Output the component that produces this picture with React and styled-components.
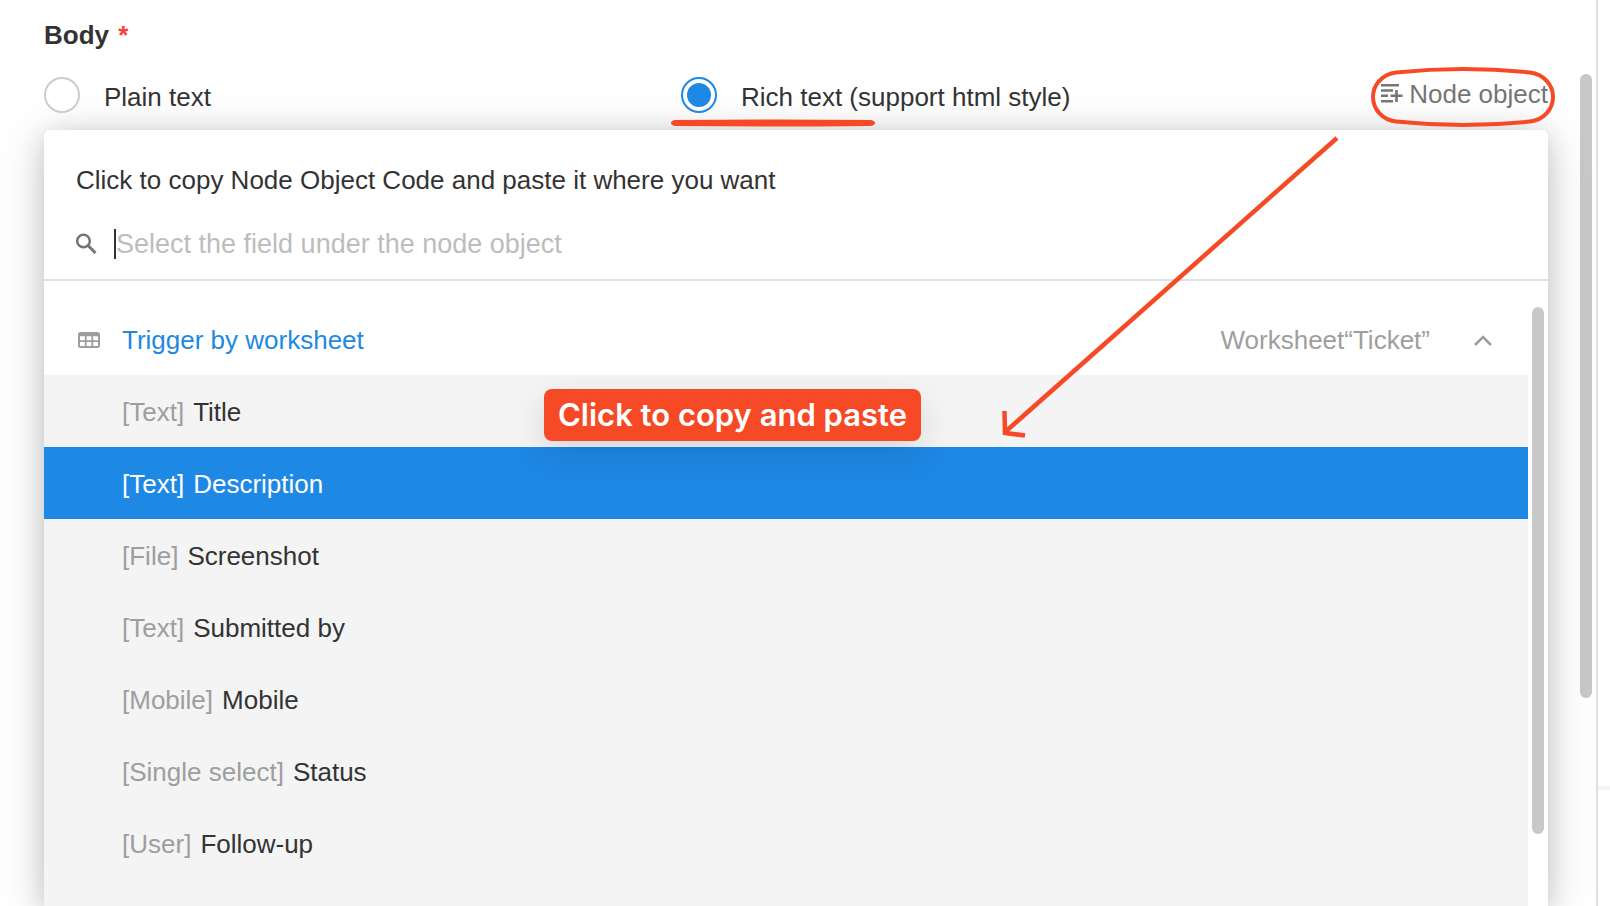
import { useState } from 'react'
import styled, { createGlobalStyle } from 'styled-components'

const fields = [
    { type: 'Text', name: 'Title' },
    { type: 'Text', name: 'Description' },
    { type: 'File', name: 'Screenshot' },
    { type: 'Text', name: 'Submitted by' },
    { type: 'Mobile', name: 'Mobile' },
    { type: 'Single select', name: 'Status' },
    { type: 'User', name: 'Follow-up' },
]

const App = () => {
    const [format, setFormat] = useState('rich')
    const [active, setActive] = useState('Description')
    const [search, setSearch] = useState('')

    const formatHandler = (e) => {
        setFormat(e.target.value)
    }

    return (
        <>
            <GlobalStyle />
            <Page>
                <Main>
                    <Content>
                        <Heading>Body <span>*</span></Heading>
                        <FormatRow>
                            <Options>
                                <Option>
                                    <Radio type="radio" name="format" value="plain" checked={format === 'plain'} onChange={formatHandler} />
                                    <OptionText>Plain text</OptionText>
                                </Option>
                                <Option>
                                    <Radio type="radio" name="format" value="rich" checked={format === 'rich'} onChange={formatHandler} />
                                    <OptionText>Rich text (support html style)</OptionText>
                                    <Underline viewBox="0 0 204 8" aria-hidden="true">
                                        <path d="M4 1 Q102 0 200 1 Q204 2 204 4 Q204 6 200 7 Q102 8 4 7 Q0 6 0 4 Q0 2 4 1 Z" fill="#f54a25" />
                                    </Underline>
                                </Option>
                            </Options>
                            <NodeButton type="button">
                                <svg width="22" height="20" viewBox="0 0 22 20" fill="#757575" aria-hidden="true">
                                    <path d="M0 0h18v2.500H0zM0 5.300h12v2.500H0zM0 10.600h7v2.500H0zM0 16h12v2.500H0zM9.500 10.600h12v2.500h-12zM14.200 6h2.600v12h-2.600z" />
                                </svg>
                                Node object
                                <Ring viewBox="0 0 184 60" fill="none" stroke="#f54a25" aria-hidden="true">
                                    <path d="M25 5.500 Q92 -1.500 159 5.500 C173 7.200 182 18 182 30 C182 42 173 52.800 159 54.500 Q92 61.500 25 54.500 C11 52.800 2 42 2 30 C2 18 11 7.200 25 5.500 Z" strokeWidth="4" />
                                </Ring>
                            </NodeButton>
                        </FormatRow>
                        <Panel>
                            <PanelTitle>Click to copy Node Object Code and paste it where you want</PanelTitle>
                            <SearchRow>
                                <svg width="22" height="22" viewBox="1 0 22 22" fill="none" stroke="#757575" aria-hidden="true">
                                    <circle cx="8.500" cy="8" r="6.300" strokeWidth="2.500" />
                                    <path d="M13 12.500 L20.500 20" strokeWidth="3" />
                                </svg>
                                <Caret />
                                <SearchInput
                                    aria-label="Select the field under the node object"
                                    placeholder="Select the field under the node object"
                                    value={search}
                                    onChange={(e) => setSearch(e.target.value)}
                                />
                            </SearchRow>
                            <PanelBody>
                                <Group>
                                    <GroupHeader type="button" aria-expanded="true">
                                        <svg width="22" height="17" viewBox="0 0 22 17" aria-hidden="true">
                                            <rect width="22" height="16" rx="2.500" fill="#9e9e9e" />
                                            <path d="M2 4.300h4.800v4H2zM8.600 4.300h4.800v4H8.600zM15.200 4.300h4.800v4h-4.800zM2 10h4.800v4H2zM8.600 10h4.800v4H8.600zM15.200 10h4.800v4h-4.800z" fill="#fff" />
                                        </svg>
                                        <GroupName>Trigger by worksheet</GroupName>
                                        <GroupSource>Worksheet“Ticket”</GroupSource>
                                        <svg width="18" height="11" viewBox="0 0 18 11" fill="none" stroke="#9e9e9e" strokeWidth="2.500" aria-hidden="true">
                                            <path d="M1 10 L9 2 L17 10" />
                                        </svg>
                                    </GroupHeader>
                                    <FieldList>
                                        {fields.map(field => (
                                            <li key={field.name}>
                                                <FieldButton type="button" $active={field.name === active} onClick={() => setActive(field.name)}>
                                                    <FieldType $active={field.name === active}>[{field.type}]</FieldType>
                                                    {field.name}
                                                </FieldButton>
                                            </li>
                                        ))}
                                    </FieldList>
                                    <Badge>Click to copy and paste</Badge>
                                </Group>
                                <PanelTrack>
                                    <Thumb $size="88%" />
                                </PanelTrack>
                            </PanelBody>
                        </Panel>
                        <Arrow viewBox="0 0 340 304" fill="none" stroke="#f54a25" aria-hidden="true">
                            <path d="M337 3 L4 298" strokeWidth="4.500" />
                            <path d="M4.500 276 L5 298 L25 300.500" strokeWidth="4.500" />
                        </Arrow>
                    </Content>
                    <PageTrack>
                        <Thumb $size="75%" />
                    </PageTrack>
                </Main>
                <Side />
            </Page>
        </>
    )
}

const GlobalStyle = createGlobalStyle`
    * {
        box-sizing: border-box;
    }

    body {
        margin: 0;
        background: #fff;
        color: #333;
        font-family: "Liberation Sans", Arial, sans-serif;
        font-size: 26px;
        line-height: 30px;
    }

    button, input {
        margin: 0;
        padding: 0;
        border: none;
        background: none;
        color: inherit;
        font: inherit;
        text-align: left;
    }

    button {
        cursor: pointer;
    }

    svg {
        flex: none;
    }
`

const Page = styled.div`
    display: flex;
    height: 100vh;
    overflow: hidden;
`

const Main = styled.main`
    flex: 1;
    min-width: 0;
    display: flex;
    padding-right: 4px;
    border-right: 2px solid #e0e0e0;
`

const Content = styled.div`
    position: relative;
    flex: 1;
    min-width: 0;
    display: flex;
    flex-direction: column;
    padding: 20px 32px 0 44px;
`

const Heading = styled.h2`
    margin: 0 0 27px;
    font-size: 26px;
    font-weight: bold;

    span {
        margin-left: 2px;
        color: #f44336;
    }
`

const FormatRow = styled.div`
    position: relative;
    z-index: 1;
    display: flex;
    align-items: center;
`

const Options = styled.div`
    flex: 1;
    display: grid;
    grid-template-columns: 1fr 1fr;
`

const Option = styled.label`
    position: relative;
    display: flex;
    align-items: center;
    gap: 24px;
    cursor: pointer;
`

const OptionText = styled.span`
    padding-top: 4px;
`

const Radio = styled.input`
    appearance: none;
    width: 36px;
    height: 36px;
    border: 2px solid #ccc;
    border-radius: 50%;
    background: #fff;

    &:checked {
        padding: 4px;
        border-color: #1e88e5;
        background: #1e88e5 content-box;
    }
`

const Underline = styled.svg`
    position: absolute;
    top: 42px;
    left: -10px;
    width: 204px;
    height: 8px;
`

const NodeButton = styled.button`
    position: relative;
    display: flex;
    align-items: center;
    justify-content: flex-end;
    gap: 6px;
    width: 230px;
    padding-bottom: 2px;
    color: #757575;
`

const Ring = styled.svg`
    position: absolute;
    top: -12px;
    right: -7px;
    width: 184px;
    height: 60px;
`

const Panel = styled.section`
    flex: 1;
    min-height: 0;
    display: flex;
    flex-direction: column;
    margin-top: 17px;
    padding-top: 34px;
    border-radius: 6px 6px 0 0;
    background: #fff;
    box-shadow: 0 8px 48px rgba(0, 0, 0, 0.18), 0 4px 24px rgba(0, 0, 0, 0.12);
`

const PanelTitle = styled.p`
    margin: 0 32px;
    line-height: 32px;
`

const SearchRow = styled.div`
    display: flex;
    align-items: center;
    height: 85px;
    padding: 13px 32px 0;
    border-bottom: 2px solid #e0e0e0;
`

const Caret = styled.span`
    width: 2px;
    height: 30px;
    margin-left: 16px;
    background: #333;
`

const SearchInput = styled.input`
    flex: 1;
    min-width: 0;
    outline: none;
    font-size: 27px;

    &::placeholder {
        color: #bdbdbd;
        opacity: 1;
    }
`

const PanelBody = styled.div`
    flex: 1;
    min-height: 0;
    display: flex;
    gap: 4px;
    padding: 22px 4px 0 0;
`

const Group = styled.div`
    position: relative;
    flex: 1;
    min-width: 0;
    display: flex;
    flex-direction: column;
    overflow: hidden;
`

const GroupHeader = styled.button`
    flex: none;
    display: flex;
    align-items: center;
    width: 100%;
    height: 72px;
    padding: 2px 36px 0 34px;
`

const GroupName = styled.span`
    flex: 1;
    margin-left: 22px;
    color: #1e88e5;
`

const GroupSource = styled.span`
    margin-right: 44px;
    color: #9e9e9e;
`

const FieldList = styled.ul`
    flex: 1;
    margin: 0;
    padding: 0;
    list-style: none;
    background: #f4f4f4;
`

const FieldButton = styled.button`
    display: flex;
    align-items: center;
    gap: 9px;
    width: 100%;
    height: 72px;
    padding: 2px 78px 0;
    background: ${({ $active }) => ($active ? '#1e88e5' : 'transparent')};
    color: ${({ $active }) => ($active ? '#fff' : '#333')};
`

const FieldType = styled.span`
    color: ${({ $active }) => ($active ? '#fff' : '#9e9e9e')};
`

const Badge = styled.div`
    position: absolute;
    top: 86px;
    left: 500px;
    padding: 0 14px;
    border-radius: 8px;
    background: #f54a25;
    box-shadow: 0 12px 36px rgba(0, 0, 0, 0.12);
    color: #fff;
    font-family: Inter, sans-serif;
    font-size: 31px;
    font-weight: 600;
    line-height: 52px;
    white-space: nowrap;
`

const Arrow = styled.svg`
    position: absolute;
    top: 135px;
    right: 240px;
    z-index: 1;
    width: 340px;
    height: 304px;
    pointer-events: none;
`

const PageTrack = styled.div`
    width: 12px;
    padding-top: 74px;
`

const PanelTrack = styled.div`
    width: 12px;
    padding-top: 4px;
`

const Thumb = styled.div`
    height: ${({ $size }) => $size};
    border-radius: 6px;
    background: #c8c8c8;
`

const Side = styled.aside`
    width: 12px;
    padding-top: 786px;

    &::before {
        content: '';
        display: block;
        height: 4px;
        background: #f4f4f4;
    }
`

export default App
